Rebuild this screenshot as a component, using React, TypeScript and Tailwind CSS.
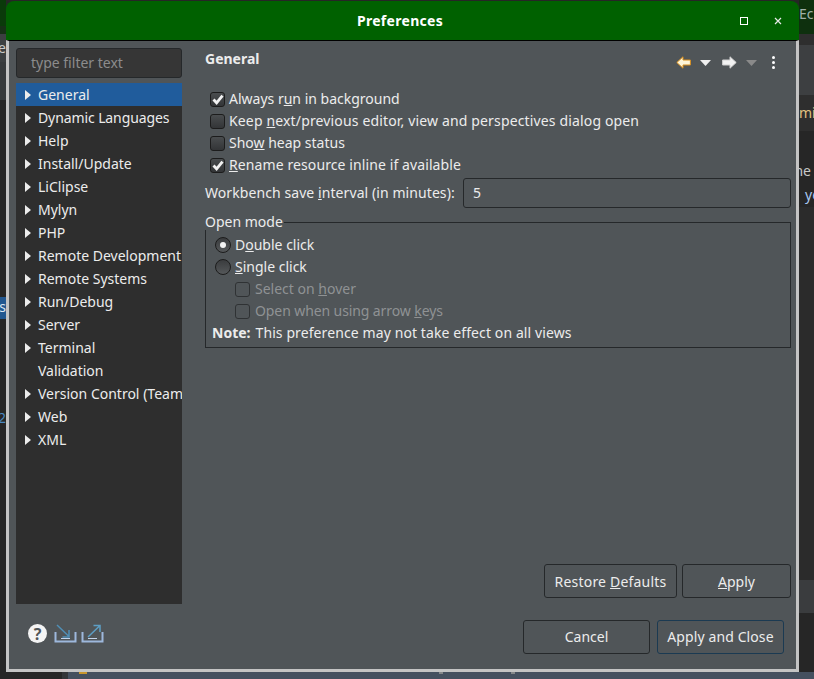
import React from "react";

const font = "font-['Noto_Sans','Open_Sans',sans-serif]";

const tree = [
  "General",
  "Dynamic Languages",
  "Help",
  "Install/Update",
  "LiClipse",
  "Mylyn",
  "PHP",
  "Remote Development",
  "Remote Systems",
  "Run/Debug",
  "Server",
  "Terminal",
  "Validation",
  "Version Control (Team)",
  "Web",
  "XML",
];

function Check({ on, off }: { on?: boolean; off?: boolean }) {
  return (
    <span
      className={`flex h-[15px] w-[15px] shrink-0 items-center justify-center rounded-[3px] border ${
        off ? "border-[#2f3234] bg-[#505558]" : "border-[#1c1c1c] bg-gradient-to-b from-[#4a4d4f] to-[#333537]"
      }`}
    >
      {on && (
        <svg width="12" height="11" viewBox="0 0 12 11">
          <path d="M1.5 5.500 4.600 8.800 10.500 1.600" fill="none" stroke="#f2f2f2" strokeWidth="2.800" />
        </svg>
      )}
    </span>
  );
}

function Radio({ on }: { on?: boolean }) {
  return (
    <span className="flex h-[16px] w-[16px] shrink-0 items-center justify-center rounded-full border border-[#1c1c1c] bg-gradient-to-b from-[#3a3c3e] to-[#55585a]">
      {on && <span className="h-[6px] w-[6px] rounded-full bg-[#f2f2f2]" />}
    </span>
  );
}

function Btn({ w, blue, children }: { w: string; blue?: boolean; children: React.ReactNode }) {
  return (
    <div
      className={`flex h-[34px] items-center justify-center rounded-[3px] border ${w} ${
        blue ? "border-[#1b3a52]" : "border-[#25282a]"
      }`}
    >
      {children}
    </div>
  );
}

function Tri({ color = "#f0f0f0" }: { color?: string }) {
  return (
    <svg width="11" height="6" viewBox="0 0 11 6">
      <path d="M0 0h11L5.5 6z" fill={color} />
    </svg>
  );
}

function Arrow({ flip, fill, stroke }: { flip?: boolean; fill: string; stroke: string }) {
  return (
    <svg width="15" height="13" viewBox="0 0 15 13" className={flip ? "-scale-x-100" : ""}>
      <path d="M.8 6.5 7 .8v3.2h7.4v5H7v3.2z" fill={fill} stroke={stroke} strokeWidth="1" />
    </svg>
  );
}

function TrayIcon({ out }: { out?: boolean }) {
  return (
    <svg width="23" height="19" viewBox="0 0 23 19">
      <path d="M1.5 8v9.500h20V8" fill="none" stroke="#9db8dc" strokeWidth="2" />
      <path d="M7 14.500h9" stroke="#c4d4ea" strokeWidth="1" />
      {out ? (
        <path d="M7 13 18.500 2M12.500 1.500h6.500V8" fill="none" stroke="#5d9ec4" strokeWidth="1.500" />
      ) : (
        <path d="M3 1 15 12.500M15 6v7H8.500" fill="none" stroke="#4f8fb6" strokeWidth="1.500" />
      )}
    </svg>
  );
}

export default function App() {
  return (
    <div className={`flex h-[679px] w-[814px] flex-col overflow-hidden bg-[#262626] text-[14px] leading-[20px] text-[#ececec] ${font}`}>
      <div className="flex h-[672px]">
        {/* what shows of the window behind, left */}
        <div className="flex w-[6px] flex-col overflow-hidden text-[14px] text-[#c8c8c8]">
          <div className="h-[26px] bg-[#0a3a0a]" />
          <div className="h-[8px] bg-[#163016]" />
          <div className="flex h-[28px] items-center justify-end bg-[#3c3f41]">
            <span>e</span>
          </div>
          <div className="h-[38px] bg-[#373a3c]" />
          <div className="h-[197px] bg-[#262626]" />
          <div className="flex h-[22px] items-start justify-end bg-[#22578f] text-[#dbe6f2]">
            <span>s</span>
          </div>
          <div className="flex h-[198px] items-center justify-end bg-[#262626] text-[#4a88c0]">
            <span>2</span>
          </div>
        </div>

        {/* dialog */}
        <div className="flex w-[793px] flex-col">
          <div className="mt-px flex h-[39px] shrink-0 items-center rounded-t-[8px] bg-[#006100]">
            <div className="flex-1 pl-[54px] text-center text-[14px] font-bold tracking-[0.3px] text-white">Preferences</div>
            <div className="flex w-[59px] items-center">
              <span className="h-[8px] w-[8px] border border-white" />
              <svg width="8" height="8" viewBox="0 0 8 8" className="ml-[26px]">
                <path d="M1 1l6 6M7 1 1 7" stroke="#e8e8e8" strokeWidth="1.200" />
              </svg>
            </div>
          </div>
          <div className="flex min-h-0 flex-1 flex-col border-x-[3px] border-t border-b-[3px] border-x-[#c4c4c4] border-t-black border-b-[#c4c4c4] bg-[#505558]">
            <div className="flex min-h-0 flex-1 pl-[7px] pr-[5px] pt-[7px]">
              {/* left column */}
              <div className="flex w-[166px] shrink-0 flex-col">
                <div className="flex h-[30px] items-center rounded-[3px] border border-[#25282a] bg-[#363636] pl-[14px] text-[#8c8c8c]">
                  type filter text
                </div>
                <div className="mt-[5px] flex-1 overflow-hidden bg-[#2e2e2e] whitespace-nowrap">
                  {tree.map((name, i) => (
                    <div key={name} className={`flex h-[23px] items-center ${i === 0 ? "bg-[#205c9c]" : ""}`}>
                      <span className="flex w-[22px] shrink-0 justify-end pr-[7px]">
                        {name !== "Validation" && (
                          <svg width="6" height="10" viewBox="0 0 6 10">
                            <path d="M0 0l6 5-6 5z" fill="#ececec" />
                          </svg>
                        )}
                      </span>
                      <span className={name === "Dynamic Languages" ? "tracking-[-0.1px]" : ""}>{name}</span>
                    </div>
                  ))}
                </div>
              </div>

              {/* right column */}
              <div className="ml-[23px] flex min-w-0 flex-1 flex-col">
                <div className="flex h-[25px] items-start justify-between">
                  <span className="mt-px font-bold">General</span>
                  <div className="mt-[8px] flex items-center pr-[16px]">
                    <Arrow fill="#fff6d8" stroke="#d98f1c" />
                    <span className="ml-[9px]"><Tri /></span>
                    <span className="ml-[11px]"><Arrow flip fill="#f2f2f2" stroke="#d0d0d0" /></span>
                    <span className="ml-[9px]"><Tri color="#8a8a8a" /></span>
                    <span className="ml-[15px] flex flex-col gap-[2px]">
                      <span className="h-[3px] w-[3px] rounded-full bg-white" />
                      <span className="h-[3px] w-[3px] rounded-full bg-white" />
                      <span className="h-[3px] w-[3px] rounded-full bg-white" />
                    </span>
                  </div>
                </div>

                <div className="mt-[15px] flex flex-col pl-[5px]">
                  <div className="flex h-[22px] items-center gap-[4px]">
                    <Check on /> <span>Always r<u>u</u>n in background</span>
                  </div>
                  <div className="flex h-[22px] items-center gap-[4px]">
                    <Check /> <span className="tracking-[0.15px]">Keep <u>n</u>ext/previous editor, view and perspectives dialog open</span>
                  </div>
                  <div className="flex h-[22px] items-center gap-[4px]">
                    <Check /> <span>Sho<u>w</u> heap status</span>
                  </div>
                  <div className="flex h-[22px] items-center gap-[4px]">
                    <Check on /> <span className="tracking-[0.1px]"><u>R</u>ename resource inline if available</span>
                  </div>
                </div>

                <div className="mt-[2px] flex h-[30px] items-center">
                  <span className="w-[258px] shrink-0 tracking-[0.08px]">Workbench save <u>i</u>nterval (in minutes):</span>
                  <div className="flex h-[30px] flex-1 items-center rounded-[3px] border border-[#25282a] pl-[9px]">5</div>
                </div>

                <fieldset className="mt-[6px] h-[134px] border border-[#25282a] px-[6px]">
                  <legend className="-ml-[7px] pr-[1px] leading-[16px]">Open mode</legend>
                  <div className="mt-[4px] flex flex-col">
                    <div className="flex h-[22px] items-center gap-[4px] pl-[3px]">
                      <Radio on /> <span>D<u>o</u>uble click</span>
                    </div>
                    <div className="flex h-[22px] items-center gap-[4px] pl-[3px]">
                      <Radio /> <span><u>S</u>ingle click</span>
                    </div>
                    <div className="flex h-[22px] items-center gap-[5px] pl-[23px] text-[#8f9294]">
                      <Check off /> <span>Select on <u>h</u>over</span>
                    </div>
                    <div className="flex h-[22px] items-center gap-[5px] pl-[23px] text-[#8f9294]">
                      <Check off /> <span className="tracking-[-0.1px]">Open when using arrow <u>k</u>eys</span>
                    </div>
                    <div className="flex h-[22px] items-center gap-[5px]">
                      <b>Note:</b> <span className="tracking-[0.1px]">This preference may not take effect on all views</span>
                    </div>
                  </div>
                </fieldset>

                <div className="mt-auto mb-[6px] flex justify-end gap-[5px]">
                  <Btn w="w-[133px]">
                    <span className="mt-px tracking-[0.2px]">Restore <u>D</u>efaults</span>
                  </Btn>
                  <Btn w="w-[109px]">
                    <span className="mt-px"><u>A</u>pply</span>
                  </Btn>
                </div>
              </div>
            </div>

            {/* footer */}
            <div className="flex h-[65px] shrink-0 items-start justify-between pl-[19px] pr-[12px]">
              <div className="mt-[20px] flex items-center">
                <span className="flex h-[19px] w-[19px] items-center justify-center rounded-full bg-[#f4f4f4] text-[16px] font-bold text-[#505558]">
                  ?
                </span>
                <span className="ml-[7px]"><TrayIcon /></span>
                <span className="ml-[4px]"><TrayIcon out /></span>
              </div>
              <div className="mt-[16px] flex gap-[7px]">
                <Btn w="w-[127px]">Cancel</Btn>
                <Btn w="w-[127px]" blue><span className="tracking-[0.1px]">Apply and Close</span></Btn>
              </div>
            </div>
          </div>
        </div>

        {/* what shows of the window behind, right */}
        <div className="flex w-[15px] flex-col overflow-hidden whitespace-nowrap text-[14px] text-[#c8c8c8]">
          <div className="flex h-[28px] items-center bg-[#0e300e] text-[#9fb0a8]">
            <span>Ecl</span>
          </div>
          <div className="h-[6px] bg-[#0e300e]" />
          <div className="h-[11px] bg-[#2e2e2e]" />
          <div className="h-[50px] bg-[#3d3f41]" />
          <div className="flex h-[36px] items-center bg-[#2e2e2e] text-[#e0c080]">
            <span>mi</span>
          </div>
          <div className="h-[30px] bg-[#262626]" />
          <div className="flex h-[22px] justify-end bg-[#262626] pr-[3px]">
            <span>ne</span>
          </div>
          <div className="flex h-[24px] items-center bg-[#262626] pl-[6px] text-[#a8c8f0]">
            <span>ye</span>
          </div>
          <div className="h-[373px] bg-[#2b2b2b]" />
          <div className="h-[33px] bg-[#3a3c3e]" />
          <div className="flex-1 bg-[#262626]" />
        </div>
      </div>
      <div className="flex flex-1">
        <div className="w-[62px] bg-[#262626]" />
        <div className="w-[6px] bg-[#333538]" />
        <div className="flex flex-1 items-start bg-[#45505f]">
          <span className="ml-[11px] h-[2px] w-[8px] bg-[#c8962e]" />
          <span className="ml-[352px] h-[2px] w-[4px] bg-[#85888a]" />
          <span className="ml-[68px] h-[2px] w-[4px] bg-[#85888a]" />
        </div>
      </div>
    </div>
  );
}
